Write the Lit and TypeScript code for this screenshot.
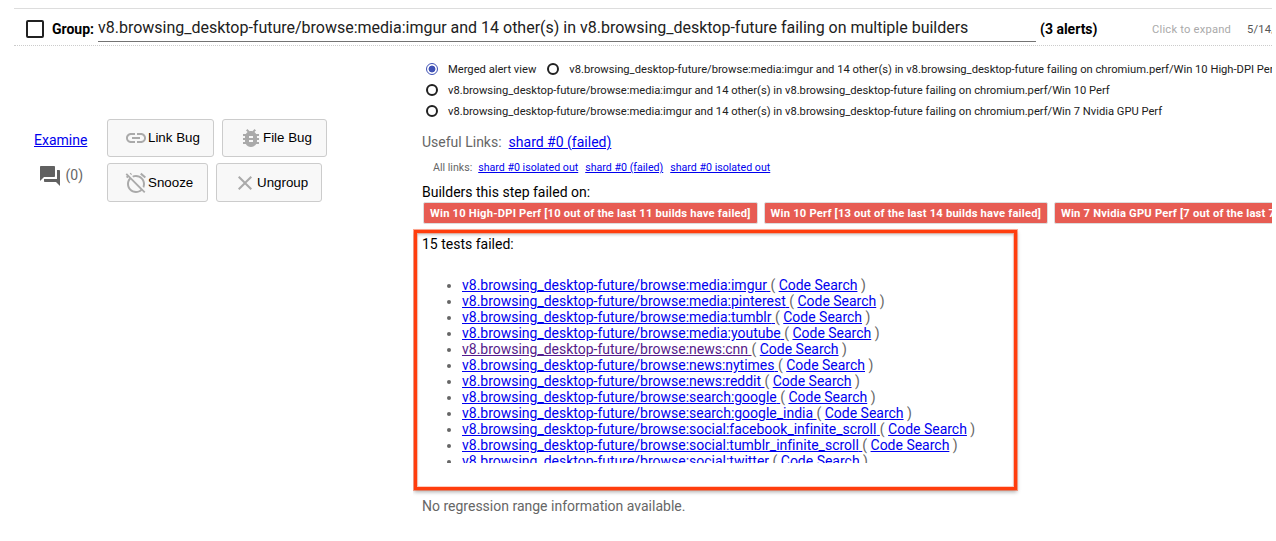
import { LitElement, html, css, svg } from "lit";
import { customElement } from "lit/decorators.js";

const GROUP = "v8.browsing_desktop-future/browse:media:imgur and 14 other(s) in v8.browsing_desktop-future failing on";

const BUILDERS = [
  "Win 10 High-DPI Perf [10 out of the last 11 builds have failed]",
  "Win 10 Perf [13 out of the last 14 builds have failed]",
  "Win 7 Nvidia GPU Perf [7 out of the last 7 builds have failed]",
];

const TESTS = [
  "media:imgur", "media:pinterest", "media:tumblr", "media:youtube", "news:cnn",
  "news:nytimes", "news:reddit", "search:google", "search:google_india",
  "social:facebook_infinite_scroll", "social:tumblr_infinite_scroll", "social:twitter",
];

const ICONS = {
  link: svg`<path d="M3.9 12c0-1.71 1.39-3.1 3.1-3.1h4V7H7c-2.76 0-5 2.24-5 5s2.24 5 5 5h4v-1.9H7c-1.71 0-3.1-1.39-3.1-3.1zM8 13h8v-2H8v2zm9-6h-4v1.9h4c1.71 0 3.1 1.39 3.1 3.1s-1.39 3.1-3.1 3.1h-4V17h4c2.76 0 5-2.24 5-5s-2.24-5-5-5z"/>`,
  bug: svg`<path d="M20 8h-2.81c-.45-.78-1.07-1.45-1.82-1.96L17 4.41 15.59 3l-2.17 2.17C12.96 5.06 12.49 5 12 5c-.49 0-.96.06-1.41.17L8.41 3 7 4.41l1.62 1.63C7.88 6.55 7.26 7.22 6.81 8H4v2h2.09c-.05.33-.09.66-.09 1v1H4v2h2v1c0 .34.04.67.09 1H4v2h2.81c1.04 1.79 2.97 3 5.19 3s4.15-1.21 5.19-3H20v-2h-2.09c.05-.33.09-.66.09-1v-1h2v-2h-2v-1c0-.34-.04-.67-.09-1H20V8zm-6 8h-4v-2h4v2zm0-4h-4v-2h4v2z"/>`,
  snooze: svg`<path d="M12 6c3.87 0 7 3.13 7 7 0 .84-.16 1.65-.43 2.4l1.52 1.52c.58-1.19.91-2.51.91-3.92 0-4.97-4.03-9-9-9-1.41 0-2.73.33-3.92.91L9.6 6.43C10.35 6.16 11.16 6 12 6zm10-.28l-4.6-3.86-1.29 1.53 4.6 3.86L22 5.72zM2.92 2.29L1.65 3.57 2.98 4.9l-1.11.93 1.42 1.42 1.11-.94.8.8C3.83 8.69 3 10.75 3 13c0 4.97 4.02 9 9 9 2.25 0 4.31-.83 5.89-2.2l2.2 2.2 1.27-1.27L3.89 3.27l-.97-.98zm13.55 16.1C15.26 19.39 13.7 20 12 20c-3.87 0-7-3.13-7-7 0-1.7.61-3.26 1.61-4.47l9.86 9.86zM8.02 3.28L6.6 1.86l-.86.71 1.42 1.42.86-.71z"/>`,
  clear: svg`<path d="M19 6.41L17.59 5 12 10.59 6.41 5 5 6.41 10.59 12 5 17.59 6.41 19 12 13.41 17.59 19 19 17.59 13.41 12z"/>`,
  answer: svg`<path d="M21 6h-2v9H6v2c0 .55.45 1 1 1h11l4 4V7c0-.55-.45-1-1-1zm-4 6V3c0-.55-.45-1-1-1H3c-.55 0-1 .45-1 1v14l4-4h10c.55 0 1-.45 1-1z"/>`,
};

const icon = (name: keyof typeof ICONS) =>
  html`<svg class="icon" viewBox="0 0 24 24" width="24" height="24">${ICONS[name]}</svg>`;

@customElement("alert-header")
class AlertHeader extends LitElement {
  static styles = css`
    :host { display: flex; box-sizing: border-box; height: 38px; border-top: 1px solid #ddd;
      border-bottom: 1px dotted #ccc; white-space: nowrap; overflow: hidden; }
    .check { flex: none; box-sizing: border-box; width: 18px; height: 18px; margin: 11px 8px 0 12px;
      border: 2px solid #212121; border-radius: 2px; }
    .label { flex: none; width: 46px; font-weight: 700; line-height: 16px; margin-top: 12px; color: #000; }
    .title { flex: none; box-sizing: border-box; width: 938px; height: 33px; padding-top: 7px;
      font-size: 16px; line-height: 24px; letter-spacing: -0.008px; color: #212121; border-bottom: 1px solid #737373; }
    .count { flex: none; width: 112px; padding-left: 4px; box-sizing: border-box; font-weight: 700;
      line-height: 16px; margin-top: 12px; color: #000; }
    .small { flex: none; font-size: 11.2px; line-height: 14px; margin-top: 14px; letter-spacing: 0.2px; color: #555; }
    .small.hint { width: 95px; color: #aaa; margin-left: 4px; }
  `;
  render() {
    return html`
      <span class="check"></span><span class="label">Group:</span>
      <span class="title">${GROUP} multiple builders</span>
      <span class="count">(3 alerts)</span>
      <span class="small hint">Click to expand</span><span class="small">5/14/</span>`;
  }
}

@customElement("alert-actions")
class AlertActions extends LitElement {
  static styles = css`
    :host { display: flex; flex: none; width: 399px; box-sizing: border-box; padding: 73px 0 0 20px; }
    .side { width: 73px; }
    .examine { display: block; color: #00e; line-height: 16px; margin-top: 13px; }
    .comments { display: flex; align-items: center; height: 24px; margin: 16px 0 0 4px; gap: 4px; color: #666; }
    .comments .icon { fill: #616161; }
    .comments span { margin: -2px 0 0 -0.5px; }
    .row { display: flex; gap: 8px; margin-bottom: 6px; }
    button { display: flex; align-items: center; box-sizing: border-box; height: 38px; margin: 0;
      padding: 0 0 1px 16px; border: 1px solid #ccc; border-radius: 3px; background: #f8f8f8; color: #000;
      font: 13.333px "Liberation Sans", Arial, sans-serif; white-space: nowrap; }
    .second button { height: 39px; padding-bottom: 0; }
    .icon { flex: none; fill: #aaa; }
    .link { width: 107px; } .file { width: 105px; } .snooze { width: 101px; } .ungroup { width: 106px; }
  `;
  render() {
    return html`
      <div class="side"><a class="examine" href="#">Examine</a>
        <div class="comments">${icon("answer")}<span>(0)</span></div></div>
      <div>
        <div class="row"><button class="link">${icon("link")}Link Bug</button><button class="file">${icon("bug")}File Bug</button></div>
        <div class="row second"><button class="snooze">${icon("snooze")}Snooze</button><button class="ungroup">${icon("clear")}Ungroup</button></div>
      </div>`;
  }
}

@customElement("alert-details")
class AlertDetails extends LitElement {
  static styles = css`
    :host { display: block; flex: none; box-sizing: border-box; width: 859px; padding-left: 9px; overflow: hidden;
      color: #666; white-space: nowrap; }
    a { color: #00e; }
    a.visited { color: #551a8b; }
    .radios { padding: 12px 0 0 4px; font-size: 11.2px; letter-spacing: -0.006px; color: #212121; }
    .line { display: flex; height: 21px; align-items: center; }
    .radio { flex: none; box-sizing: border-box; width: 12px; height: 12px; border: 2px solid #212121;
      border-radius: 50%; margin-right: 10px; }
    .radio.on { border: 1.5px solid #3f51b5; background: radial-gradient(#3f51b5 0 3px, #fff 3.8px); }
    .option { display: flex; align-items: center; margin-right: 11px; }
    .text { padding-top: 1px; line-height: 15px; }
    .useful { margin: 12px 0 0; line-height: 18px; display: flex; gap: 7px; }
    .all { display: flex; gap: 7px; padding-left: 11px; margin-top: 10px; font-size: 10.64px; line-height: 14px; }
    .all span { margin-right: -1px; }
    .heading { color: #000; line-height: 16px; }
    .builders { margin-top: 9px; }
    .badges { display: flex; gap: 6px; margin: 2px 0 0 1px; }
    .badge { flex: none; box-sizing: border-box; height: 22px; line-height: 21px; padding: 0 6px; color: #fff;
      font-size: 11.2px; letter-spacing: 0.2px; font-weight: 700; background: #e75c53; border: 1px solid #ddd;
      border-radius: 2px; }
    .failed { position: relative; height: 262px; box-sizing: border-box; margin-top: 6px; padding-top: 6px; }
    .outline { position: absolute; left: -8px; top: 0; width: 603px; height: 260px; box-sizing: border-box;
      border: 3px solid #ff3d0d; pointer-events: none;
      box-shadow: 0 0 0 1px #ff3d0d70, 0 2px 4px #0005, inset 0 0 0 1px #ff3d0d40, inset 0 2px 3px #0003; }
    .tests { height: 186px; overflow: hidden; margin: 25px 0 0; padding-left: 40px; letter-spacing: -0.01px; }
    .tests li { line-height: 16px; }
    .range { margin-top: 6px; line-height: 16px; }
  `;
  render() {
    const radio = (text: string, on = false) =>
      html`<span class="option"><span class="radio ${on ? "on" : ""}"></span><span class="text">${text}</span></span>`;
    return html`
      <div class="radios">
        <div class="line">${radio("Merged alert view", true)}${radio(`${GROUP} chromium.perf/Win 10 High-DPI Perf`)}</div>
        <div class="line">${radio(`${GROUP} chromium.perf/Win 10 Perf`)}</div>
        <div class="line">${radio(`${GROUP} chromium.perf/Win 7 Nvidia GPU Perf`)}</div>
      </div>
      <div class="useful"><span>Useful Links:</span><a href="#">shard #0 (failed)</a></div>
      <div class="all"><span>All links:</span><a href="#">shard #0 isolated out</a><a href="#">shard #0 (failed)</a><a href="#">shard #0 isolated out</a></div>
      <div class="heading builders">Builders this step failed on:</div>
      <div class="badges">${BUILDERS.map((b) => html`<span class="badge">${b}</span>`)}</div>
      <div class="failed">
        <div class="heading">15 tests failed:</div>
        <ul class="tests">${TESTS.map((t) => html`<li><a class=${t === "news:cnn" ? "visited" : ""} href="#">v8.browsing_desktop-future/browse:${t} </a>( <a href="#">Code Search</a> )</li>`)}</ul>
        <div class="outline"></div>
      </div>
      <div class="range">No regression range information available.</div>`;
  }
}

@customElement("app-root")
class AppRoot extends LitElement {
  static styles = css`
    :host { display: block; box-sizing: border-box; width: 1276px; height: 541px; padding: 8px 4px 0 14px;
      overflow: hidden; background: #fff; font: 14px Roboto, sans-serif; }
    .body { display: flex; overflow: hidden; }
  `;
  render() {
    return html`<alert-header></alert-header><div class="body"><alert-actions></alert-actions><alert-details></alert-details></div>`;
  }
}
